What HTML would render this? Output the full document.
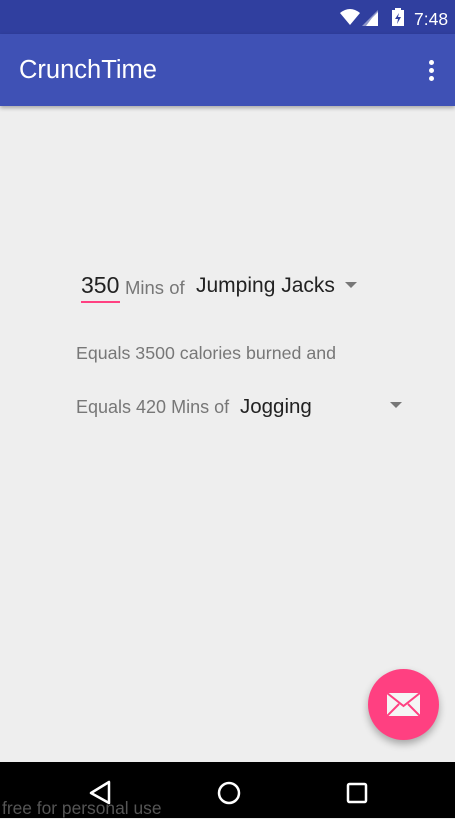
<!DOCTYPE html><html><head><style>
body{margin:0;width:455px;height:818px;position:relative;background:#eeeeee;font-family:"Liberation Sans",sans-serif;overflow:hidden}
.a{position:absolute;white-space:nowrap}
</style></head><body>
<div class="a" style="left:0;top:0;width:455px;height:34px;background:#303f9f"></div>
<div class="a" style="left:0;top:34px;width:455px;height:72px;background:#3f51b5;box-shadow:0 2px 4px rgba(0,0,0,.3)"></div>
<svg class="a" style="left:338px;top:8px" width="80" height="20"><path d="M2 5 Q12 -3 22 5 L12 17Z" fill="#fff"/><path d="M40 2 L40 18 L24 18Z" fill="#8e97c9"/><path d="M34 10 L40 4 L40 18 L28 18Z" fill="#fff"/><rect x="54" y="2" width="12" height="16" fill="#fff"/><rect x="57" y="0" width="6" height="3" fill="#fff"/><path d="M61 5 L57 11 L60 11 L59 16 L63 9 L60 9Z" fill="#303f9f"/></svg>
<div class="a" style="left:414px;top:9px;color:#fff;font-size:17.5px">7:48</div>
<div class="a" style="left:19px;top:56px;color:#fff;font-size:25.5px">CrunchTime</div>
<div class="a" style="left:429px;top:60px;width:5px;height:5px;border-radius:50%;background:#fff;box-shadow:0 8px 0 #fff,0 16px 0 #fff"></div>
<div class="a" style="left:81px;top:272px;font-size:23px;color:#222">350</div>
<div class="a" style="left:81px;top:301px;width:39px;height:2px;background:#ff4081"></div>
<div class="a" style="left:125px;top:277px;font-size:18.5px;color:#777">Mins of</div>
<div class="a" style="left:196px;top:274px;font-size:21px;color:#222">Jumping Jacks</div>
<div class="a" style="left:345px;top:282px;width:0;height:0;border-left:6px solid transparent;border-right:6px solid transparent;border-top:6px solid #777"></div>
<div class="a" style="left:76px;top:343px;font-size:17.8px;color:#777">Equals 3500 calories burned and</div>
<div class="a" style="left:76px;top:397px;font-size:18px;color:#777">Equals 420 Mins of</div>
<div class="a" style="left:240px;top:395px;font-size:20.5px;color:#222">Jogging</div>
<div class="a" style="left:390px;top:402px;width:0;height:0;border-left:6px solid transparent;border-right:6px solid transparent;border-top:6px solid #777"></div>
<div class="a" style="left:368px;top:669px;width:71px;height:71px;border-radius:50%;background:#ff4081;box-shadow:0 4px 8px rgba(0,0,0,.3)"></div>
<svg class="a" style="left:387px;top:693px" width="33" height="24"><rect x="0" y="0" width="33" height="23" fill="#f5f5f5"/><path d="M0 0 L16.5 13 L33 0 M0 23 L12 11 M33 23 L21 11" stroke="#ff4081" stroke-width="2" fill="none"/></svg>
<div class="a" style="left:0;top:762px;width:455px;height:56px;background:#000"></div>
<svg class="a" style="left:0;top:762px" width="455" height="56"><path d="M109 20 L109 41 L91 31Z" stroke="#fff" stroke-width="2.5" fill="none" stroke-linejoin="round"/><circle cx="229" cy="31" r="10" stroke="#fff" stroke-width="2.5" fill="none"/><rect x="348" y="22" width="18" height="18" rx="1.5" stroke="#fff" stroke-width="2.5" fill="none"/></svg>
<div class="a" style="left:2px;top:798px;font-size:17.4px;color:#555">free for personal use</div>
</body></html>
